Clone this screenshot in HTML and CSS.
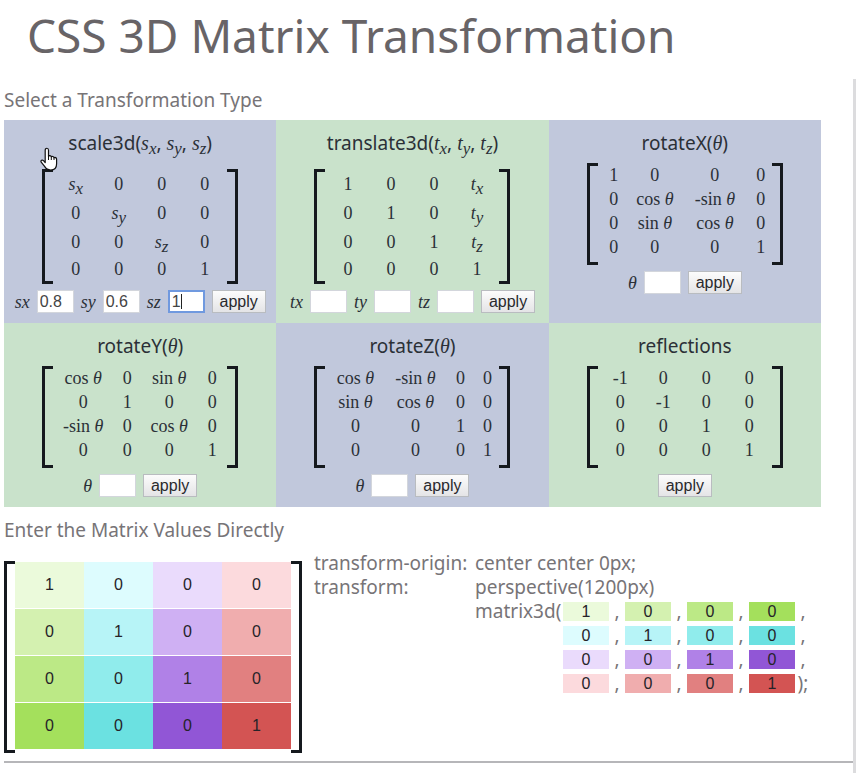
FILE: index.html
```html
<!DOCTYPE html>
<html lang="en">
<head>
<meta charset="utf-8">
<title>CSS 3D Matrix Transformation</title>
<link rel="stylesheet" href="styles.css">
</head>
<body>
<header><h1>CSS 3D Matrix Transformation</h1></header>
<main>
  <h2>Select a Transformation Type</h2>
  <div class="types">
    <section class="type tall blue">
      <h3>scale3d(<i>s<sub>x</sub></i>, <i>s<sub>y</sub></i>, <i>s<sub>z</sub></i>)</h3>
      <div class="matrix">
        <table class="even">
          <tr><td><i>s<sub>x</sub></i></td><td>0</td><td>0</td><td>0</td></tr>
          <tr><td>0</td><td><i>s<sub>y</sub></i></td><td>0</td><td>0</td></tr>
          <tr><td>0</td><td>0</td><td><i>s<sub>z</sub></i></td><td>0</td></tr>
          <tr><td>0</td><td>0</td><td>0</td><td>1</td></tr>
        </table>
      </div>
      <div class="controls">
        <label for="sx">sx</label><input id="sx" value="0.8">
        <label for="sy">sy</label><input id="sy" value="0.6">
        <label for="sz">sz</label><input id="sz" class="active" value="1">
        <button type="button">apply</button>
      </div>
      <svg class="pointer" viewBox="0 0 18 25" aria-hidden="true">
        <path d="M5.2 15.5V3.2c0-2.6 3.3-2.6 3.3 0v6.3c.3-1.2 2.5-1.1 2.8.5.5-1 2.4-.7 2.7.8.9-.8 2.6-.2 2.6 1.4v4.6c0 3.8-2 6.2-5.800 6.200-3.300 0-4.800-1.200-6.200-3.600L1.200 15.200c-.9-1.600 1-2.900 2.300-1.600z" fill="#fff" stroke="#111" stroke-width="1.200" stroke-linejoin="round"/>
        <path d="M8.500 9.500v3.500M11.300 10v3M14 10.800v2.200" fill="none" stroke="#111"/>
      </svg>
    </section>
    <section class="type tall green">
      <h3>translate3d(<i>t<sub>x</sub></i>, <i>t<sub>y</sub></i>, <i>t<sub>z</sub></i>)</h3>
      <div class="matrix">
        <table class="even">
          <tr><td>1</td><td>0</td><td>0</td><td><i>t<sub>x</sub></i></td></tr>
          <tr><td>0</td><td>1</td><td>0</td><td><i>t<sub>y</sub></i></td></tr>
          <tr><td>0</td><td>0</td><td>1</td><td><i>t<sub>z</sub></i></td></tr>
          <tr><td>0</td><td>0</td><td>0</td><td>1</td></tr>
        </table>
      </div>
      <div class="controls">
        <label for="tx">tx</label><input id="tx">
        <label for="ty">ty</label><input id="ty">
        <label for="tz">tz</label><input id="tz">
        <button type="button">apply</button>
      </div>
    </section>
    <section class="type blue">
      <h3>rotateX(<i>θ</i>)</h3>
      <div class="matrix">
        <table class="rotate-x">
          <tr><td>1</td><td>0</td><td>0</td><td>0</td></tr>
          <tr><td>0</td><td>cos <i>θ</i></td><td>-sin <i>θ</i></td><td>0</td></tr>
          <tr><td>0</td><td>sin <i>θ</i></td><td>cos <i>θ</i></td><td>0</td></tr>
          <tr><td>0</td><td>0</td><td>0</td><td>1</td></tr>
        </table>
      </div>
      <div class="controls">
        <label for="rx">θ</label><input id="rx">
        <button type="button">apply</button>
      </div>
    </section>
    <section class="type green">
      <h3>rotateY(<i>θ</i>)</h3>
      <div class="matrix">
        <table class="rotate-y">
          <tr><td>cos <i>θ</i></td><td>0</td><td>sin <i>θ</i></td><td>0</td></tr>
          <tr><td>0</td><td>1</td><td>0</td><td>0</td></tr>
          <tr><td>-sin <i>θ</i></td><td>0</td><td>cos <i>θ</i></td><td>0</td></tr>
          <tr><td>0</td><td>0</td><td>0</td><td>1</td></tr>
        </table>
      </div>
      <div class="controls">
        <label for="ry">θ</label><input id="ry">
        <button type="button">apply</button>
      </div>
    </section>
    <section class="type blue">
      <h3>rotateZ(<i>θ</i>)</h3>
      <div class="matrix">
        <table class="rotate-z">
          <tr><td>cos <i>θ</i></td><td>-sin <i>θ</i></td><td>0</td><td>0</td></tr>
          <tr><td>sin <i>θ</i></td><td>cos <i>θ</i></td><td>0</td><td>0</td></tr>
          <tr><td>0</td><td>0</td><td>1</td><td>0</td></tr>
          <tr><td>0</td><td>0</td><td>0</td><td>1</td></tr>
        </table>
      </div>
      <div class="controls">
        <label for="rz">θ</label><input id="rz">
        <button type="button">apply</button>
      </div>
    </section>
    <section class="type green">
      <h3>reflections</h3>
      <div class="matrix">
        <table class="even">
          <tr><td>-1</td><td>0</td><td>0</td><td>0</td></tr>
          <tr><td>0</td><td>-1</td><td>0</td><td>0</td></tr>
          <tr><td>0</td><td>0</td><td>1</td><td>0</td></tr>
          <tr><td>0</td><td>0</td><td>0</td><td>1</td></tr>
        </table>
      </div>
      <div class="controls"><button type="button">apply</button></div>
    </section>
  </div>

  <h2>Enter the Matrix Values Directly</h2>
  <div class="direct">
    <div class="matrix values">
      <table>
        <tr><td class="g1"><input aria-label="Row 1 column 1" value="1"></td><td class="c1"><input aria-label="Row 1 column 2" value="0"></td><td class="p1"><input aria-label="Row 1 column 3" value="0"></td><td class="r1"><input aria-label="Row 1 column 4" value="0"></td></tr>
        <tr><td class="g2"><input aria-label="Row 2 column 1" value="0"></td><td class="c2"><input aria-label="Row 2 column 2" value="1"></td><td class="p2"><input aria-label="Row 2 column 3" value="0"></td><td class="r2"><input aria-label="Row 2 column 4" value="0"></td></tr>
        <tr><td class="g3"><input aria-label="Row 3 column 1" value="0"></td><td class="c3"><input aria-label="Row 3 column 2" value="0"></td><td class="p3"><input aria-label="Row 3 column 3" value="1"></td><td class="r3"><input aria-label="Row 3 column 4" value="0"></td></tr>
        <tr><td class="g4"><input aria-label="Row 4 column 1" value="0"></td><td class="c4"><input aria-label="Row 4 column 2" value="0"></td><td class="p4"><input aria-label="Row 4 column 3" value="0"></td><td class="r4"><input aria-label="Row 4 column 4" value="1"></td></tr>
      </table>
    </div>
    <div class="code">
      <span>transform-origin:</span><span>center center 0px;</span>
      <span>transform:</span><span>perspective(1200px)</span>
      <div class="call">
        <span>matrix3d(</span>
        <div class="args">
          <b class="g1">1</b><span>,</span><b class="g2">0</b><span>,</span><b class="g3">0</b><span>,</span><b class="g4">0</b><span>,</span>
          <b class="c1">0</b><span>,</span><b class="c2">1</b><span>,</span><b class="c3">0</b><span>,</span><b class="c4">0</b><span>,</span>
          <b class="p1">0</b><span>,</span><b class="p2">0</b><span>,</span><b class="p3">1</b><span>,</span><b class="p4">0</b><span>,</span>
          <b class="r1">0</b><span>,</span><b class="r2">0</b><span>,</span><b class="r3">0</b><span>,</span><b class="r4">1</b><span>);</span>
        </div>
      </div>
    </div>
  </div>
  <hr>
</main>
</body>
</html>
```
FILE: styles.css
```css
* { box-sizing: border-box; }

body {
  margin: 0;
  min-height: 100vh;
  display: flex;
  flex-direction: column;
  background: #fff;
  color: #777477;
  font-family: "Noto Sans", "Open Sans", sans-serif;
  font-size: 19px;
  line-height: 24px;
}

h1, h2, h3 { margin: 0; font-weight: 400; }

h1 {
  height: 79px;
  padding-left: 27px;
  color: #686467;
  font-size: 46px;
  line-height: 70px;
}

h2 { font-size: 19px; line-height: 24px; }

main {
  flex: 1;
  margin-right: 1px;
  padding: 9px 0 0 4px;
  border-right: 3px solid #dcdcde;
}

.types {
  display: grid;
  grid-template-columns: repeat(3, 1fr);
  grid-template-rows: 203px 184px;
  margin: 8px 32px 11px 0;
}

.type {
  position: relative;
  display: flex;
  flex-direction: column;
  align-items: center;
  padding-top: 11px;
  color: #2b3037;
}

.blue { background: #c1c8dc; }
.green { background: #c9e2cb; }

h3 { height: 24px; margin-bottom: 8px; font-size: 19px; line-height: 24px; }
.tall h3 { margin-bottom: 14px; }

i, label, .matrix { font-family: "Liberation Serif", serif; }
i { line-height: 0; }
h3 i { font-size: 20px; }
sub { font-size: 17px; line-height: 0; vertical-align: -4px; }

.matrix {
  display: flex;
  justify-content: space-between;
  width: 196px;
  font-size: 18px;
}

.matrix::before, .matrix::after {
  content: "";
  width: 8px;
  border: 3px solid #15191e;
}
.matrix::before { border-right: 0; }
.matrix::after { border-left: 0; }

table { border-collapse: collapse; table-layout: fixed; }
td { padding: 0; text-align: center; white-space: nowrap; }

.type table { margin-bottom: 6px; }
.type tr { height: 24px; }
.tall tr { height: 29px; }
.tall tr:last-child { height: 25px; }
.tall table { margin-bottom: 3px; }

.even { width: 172px; }
.rotate-x, .rotate-y, .rotate-z { width: 174px; }
.rotate-x td:nth-child(1) { width: 32px; }
.rotate-x td:nth-child(2) { width: 50px; }
.rotate-x td:nth-child(3) { width: 70px; }
.rotate-y td:nth-child(1) { width: 60px; }
.rotate-y td:nth-child(2) { width: 28px; }
.rotate-y td:nth-child(3) { width: 56px; }
.rotate-z td:nth-child(1), .rotate-z td:nth-child(2) { width: 60px; }
.rotate-z td:nth-child(3) { width: 30px; }

.controls {
  display: flex;
  align-items: center;
  gap: 7px;
  margin-top: 6px;
}

label { font-size: 18px; font-style: italic; line-height: 20px; }

input {
  font-family: "Liberation Sans", Arial, sans-serif;
  font-size: 16px;
}

.controls input {
  width: 37px;
  height: 23px;
  padding: 0 2px;
  border: 1px solid #d3d6dc;
  background: #fff;
  color: #444;
}

.controls .active {
  border: 2px solid #7099df;
  background: linear-gradient(#222, #222) 11px center / 1px 15px no-repeat #fff;
  outline: none;
}

button {
  width: 54px;
  height: 23px;
  padding: 0;
  border: 1px solid #b9bcc0;
  background: linear-gradient(#fcfcfc, #e4e4e6);
  color: #29292d;
  font-family: "Liberation Sans", Arial, sans-serif;
  font-size: 16px;
  line-height: 20px;
}

.pointer {
  position: absolute;
  top: 27px;
  left: 36px;
  width: 18px;
  height: 25px;
}

.direct {
  display: flex;
  align-items: flex-start;
  margin-top: 9px;
}

.values {
  width: 298px;
  margin-top: 10px;
  flex: none;
}

.values table { width: 276px; margin: 1px 0 4px; }
.values tr + tr td { border-top: 1px solid #fff; }

.values input {
  display: block;
  width: 100%;
  height: 46px;
  padding: 0;
  border: 0;
  background: none;
  color: #262329;
  text-align: center;
}

.code {
  display: grid;
  grid-template-columns: 161px auto;
  margin-left: 12px;
}

.call { grid-column: 2; display: flex; }
.call > span { width: 88px; }

.args {
  display: grid;
  grid-template-columns: repeat(4, 46px 16px);
}

.args span { text-align: center; }

.args b {
  height: 19px;
  margin-top: 3px;
  color: #262329;
  font: 16px/19px "Liberation Sans", Arial, sans-serif;
  text-align: center;
}

.g1 { background: #ebfadb; }
.g2 { background: #d4f1b0; }
.g3 { background: #bce986; }
.g4 { background: #a4e05c; }
.c1 { background: #ddfcfe; }
.c2 { background: #b7f4f7; }
.c3 { background: #90ecec; }
.c4 { background: #6be1e1; }
.p1 { background: #eadbfc; }
.p2 { background: #cfb0f3; }
.p3 { background: #b081e7; }
.p4 { background: #9156d6; }
.r1 { background: #fcdadd; }
.r2 { background: #f0adae; }
.r3 { background: #e18080; }
.r4 { background: #d35453; }

hr {
  height: 2px;
  margin: 8px 0 0;
  border: 0;
  background: #b6b6b9;
}
```
